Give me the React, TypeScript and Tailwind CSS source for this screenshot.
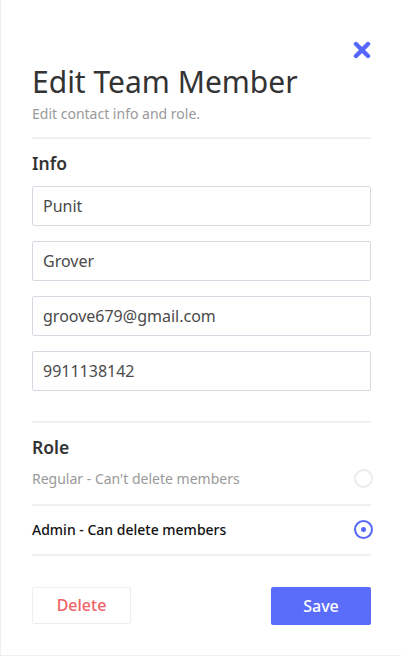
import React, { useState } from 'react';

const fields = ['Punit', 'Grover', 'groove679@gmail.com', '9911138142'];

const roles = [
    { id: 'regular', label: "Regular - Can't delete members" },
    { id: 'admin', label: 'Admin - Can delete members' },
];

const App: React.FC = () => {
    const [values, setValues] = useState(fields);
    const [role, setRole] = useState('admin');

    return (
        <div className="w-[401px] h-[656px] bg-white border-l border-b border-[#efefef] font-['Noto_Sans',sans-serif] pl-[31px] pr-[30px] pt-[41px]">
            <div className="flex justify-end">
                <button className="text-[#5668fb]">
                    <svg viewBox="0 0 18 18" className="block w-[18px] h-[18px]">
                        <path d="M3 3 L15 15 M15 3 L3 15" stroke="currentColor" strokeWidth="4.4" strokeLinecap="round" />
                    </svg>
                </button>
            </div>
            <h1 className="mt-[4.5px] text-[30px] leading-[36px] text-[#333] font-normal">Edit Team Member</h1>
            <p className="mt-[4.5px] text-[14px] leading-[20px] text-[#999]">Edit contact info and role.</p>
            <div className="mt-[13px] h-[2px] bg-[#f0f0f0]" />

            <h2 className="mt-[12px] text-[17.5px] leading-[24px] font-semibold text-[#333]">Info</h2>
            <div className="mt-[11px] flex flex-col gap-[15px]">
                {values.map((v, i) => (
                    <input
                        key={i}
                        value={v}
                        onChange={e => setValues(values.map((x, j) => (j === i ? e.target.value : x)))}
                        className="h-[40px] w-full border border-[#d5dae2] rounded-[2px] px-[10px] text-[16px] text-[#4a4a4a] outline-none"
                    />
                ))}
            </div>

            <div className="mt-[30px] h-[2px] bg-[#f0f0f0]" />
            <h2 className="mt-[11.5px] text-[17.5px] leading-[24px] font-semibold text-[#333]">Role</h2>
            <div className="flex flex-col">
                {roles.map(r => {
                    const active = role === r.id;
                    return (
                        <button
                            key={r.id}
                            onClick={() => setRole(r.id)}
                            className={`flex items-center justify-between text-left border-b-2 border-[#f0f0f0] ${r.id === 'regular' ? 'h-[47px] pb-[6px]' : 'h-[50px]'}`}
                        >
                            <span className={`text-[14px] ${active ? 'text-[#111] font-medium' : 'text-[#999]'}`}>{r.label}</span>
                            <span
                                className={`w-[19px] h-[19px] mr-[-2px] rounded-full border-[2.5px] flex items-center justify-center ${active ? 'border-[#5668fb]' : 'border-[#ececec]'}`}
                            >
                                {active && <span className="w-[5px] h-[5px] rounded-full bg-[#5668fb]" />}
                            </span>
                        </button>
                    );
                })}
            </div>

            <div className="mt-[31px] flex justify-between">
                <button className="w-[99px] h-[37px] border border-[#eee] rounded-[2px] text-[16px] font-medium text-[#f06266]">Delete</button>
                <button className="w-[100px] h-[38px] bg-[#5a6dfa] rounded-[2px] text-[16px] font-medium text-white">Save</button>
            </div>
        </div>
    );
};

export default App;
